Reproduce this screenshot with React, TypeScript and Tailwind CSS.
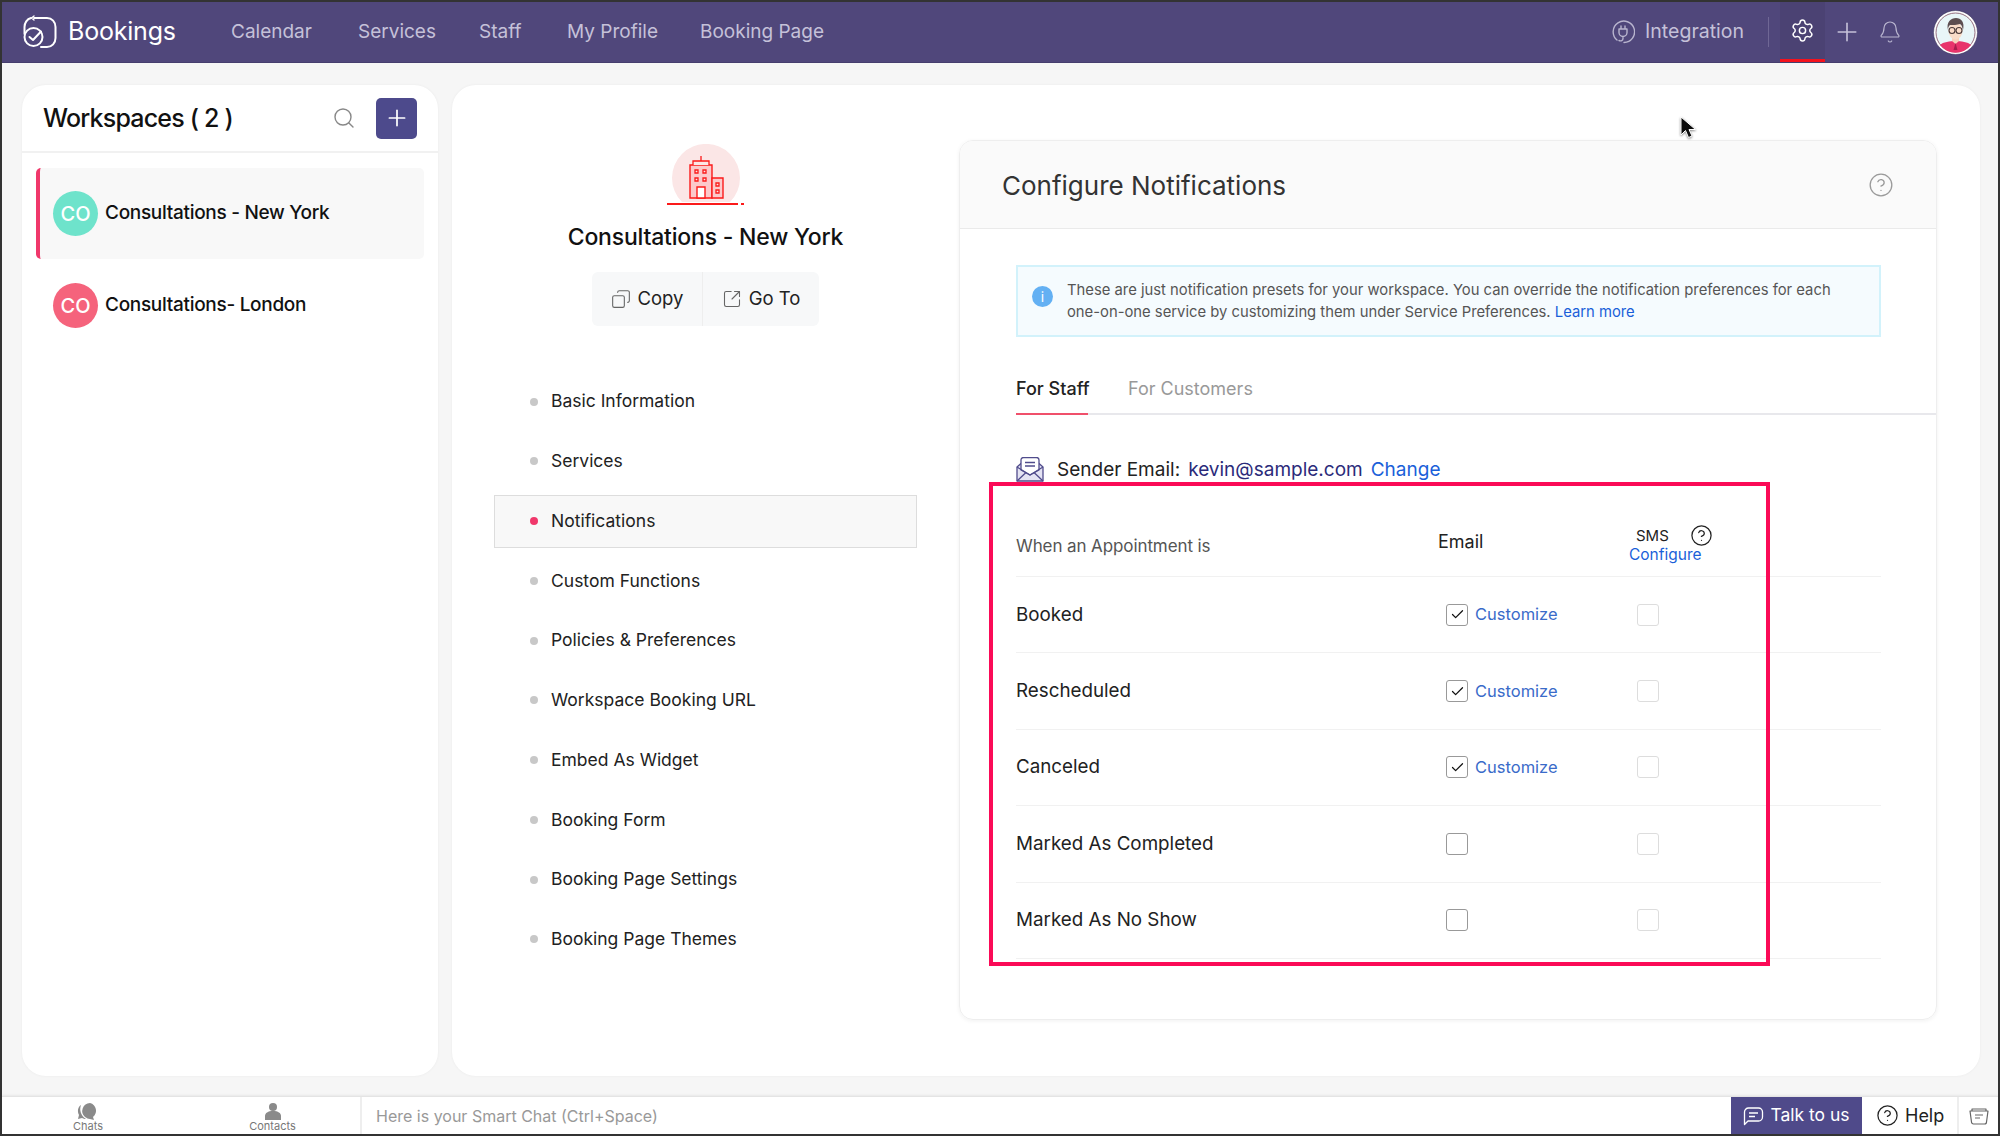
import { Bell, Check, CircleHelp, Copy, Plus, Search, Settings, SquareArrowOutUpRight } from "lucide-react";

const navLinks = [
  { label: "Calendar", className: "w-[127px]" },
  { label: "Services", className: "w-[121px]" },
  { label: "Staff", className: "w-[88px]" },
  { label: "My Profile", className: "w-[133px]" },
  { label: "Booking Page", className: "w-[124px]" },
];

const settingsLinks = [
  "Basic Information",
  "Services",
  "Notifications",
  "Custom Functions",
  "Policies & Preferences",
  "Workspace Booking URL",
  "Embed As Widget",
  "Booking Form",
  "Booking Page Settings",
  "Booking Page Themes",
];

const events = [
  { label: "Booked", checked: true },
  { label: "Rescheduled", checked: true },
  { label: "Canceled", checked: true },
  { label: "Marked As Completed", checked: false },
  { label: "Marked As No Show", checked: false },
];

function BookingsLogo() {
  return (
    <svg width="34" height="34" viewBox="0 0 34 34" fill="none" stroke="white" strokeWidth="2" strokeLinecap="round" strokeLinejoin="round">
      <path d="M11 3h13c5 0 8.500 4 8.500 9v11c0 5-3.500 9-8.500 9h-6" />
      <path d="M8 3C4 4 1.500 8 1.500 12v7" />
      <circle cx="10.500" cy="22" r="9" />
      <path d="M6.500 22l3.500 3 8-8.500" />
      <path d="M11 1L8.500 3 11 5" strokeWidth="1.400" />
    </svg>
  );
}

function PlugIcon() {
  return (
    <svg width="24" height="24" viewBox="0 0 24 24" fill="none" stroke="#b9b5cf" strokeWidth="1.4" strokeLinecap="round" strokeLinejoin="round">
      <path d="M13 22.500A10.700 10.700 0 1 0 6 20" />
      <path d="M8 9h8v3.500a4 4 0 0 1-8 0V9zM10 6v3M14 6v3M12 16.500v2c0 2-2 3-4 2" />
    </svg>
  );
}

function UserAvatar() {
  return (
    <svg width="45" height="45" viewBox="0 0 45 45">
      <circle cx="22.500" cy="22.500" r="22" fill="white" stroke="#3e3560" strokeWidth="0.600" />
      <circle cx="22.500" cy="22.500" r="19.500" fill="#e9f6f8" stroke="#7b4a5e" strokeWidth="0.800" />
      <path d="M7 35c3-3 10-4 15.500-4S35 32 38 35a19.500 19.500 0 0 1-31 0z" fill="#e8346b" />
      <path d="M19 25h7v6l-3.500 3-3.500-3z" fill="#f7d3bd" />
      <ellipse cx="22.500" cy="21" rx="7" ry="8.500" fill="#f9dcc8" />
      <path d="M15 20c-2-8 3-12 8-12s9 4 7 12c-1-3-1-5-3-6-3 1-7 1-10 1-1 1-2 2-2 5z" fill="#5d4e50" />
      <circle cx="19" cy="20.500" r="3" fill="none" stroke="#4a3a3a" strokeWidth="1.100" />
      <circle cx="26" cy="20.500" r="3" fill="none" stroke="#4a3a3a" strokeWidth="1.100" />
      <path d="M22.500 33l-2 7h4z" fill="#a81e4c" />
    </svg>
  );
}

function BuildingBadge() {
  return (
    <svg width="80" height="62" viewBox="0 0 80 62" fill="none">
      <path d="M16 58A34 34 0 1 1 64 58z" fill="#fbe6e6" />
      <path d="M1 60h71M75 60h3" stroke="#fb1a1a" strokeWidth="1.800" />
      <g stroke="#fb1a1a" strokeWidth="1.400" fill="#fcc9cb">
        <path d="M24 54V21h22v33z" />
        <path d="M46 34h11v20H46z" />
      </g>
      <g stroke="#fb1a1a" strokeWidth="1.300" fill="#fbe6e6">
        <path d="M27 21v-4h16v4M35 17v-5" />
        <path d="M29 26h3v3h-3zM37 26h3v3h-3zM29 34h3v3h-3zM37 34h3v3h-3zM50 39h3v3h-3zM50 46h3v3h-3z" />
      </g>
      <path d="M31 54V43h8v11z" fill="white" stroke="#fb1a1a" strokeWidth="1.400" />
    </svg>
  );
}

function SenderIcon() {
  return (
    <svg width="28" height="25" viewBox="0 0 28 25" fill="none" stroke="#504c8c" strokeWidth="1.300" strokeLinejoin="round">
      <path d="M1 10v14h26V10l-4-3.500H5z" fill="#e4e3f3" />
      <path d="M5 13V3a2.500 2.500 0 0 1 2.500-2.500h13A2.500 2.500 0 0 1 23 3v10l-9 5z" fill="white" />
      <path d="M9 5.500h10M9 9h10" />
      <path d="M1 24l9-8.500M27 24l-9-8.500M1 10l13 8 13-8" />
    </svg>
  );
}

function Cursor() {
  return (
    <svg width="18" height="24" viewBox="0 0 18 24" className="drop-shadow-[0_1px_1px_rgba(0,0,0,0.45)]">
      <path d="M1 1v18l4.500-4.500 3 7 3.500-1.500-3-6.500h6.500z" fill="#0c0c0c" stroke="white" strokeWidth="1" />
    </svg>
  );
}

function TopBar() {
  return (
    <header className="h-[61px] shrink-0 flex items-center bg-[#50477b] border-b border-[#463e6e]">
      <div className="ml-[21px] flex items-center gap-[11px] w-[208px]">
        <BookingsLogo />
        <span className="text-[25px] tracking-[-0.2px] text-white">Bookings</span>
      </div>
      {navLinks.map((link) => (
        <span key={link.label} className={`text-[19px] text-[#c5c1d9] ${link.className}`}>
          {link.label}
        </span>
      ))}
      <div className="ml-auto flex items-center h-full">
        <PlugIcon />
        <span className="ml-[10px] -mt-[1px] text-[19.500px] text-[#c5c1d9]">Integration</span>
        <div className="ml-[24px] h-[30px] w-px bg-[#6f6795]" />
        <div className="ml-[11px] h-full w-[45px] flex items-center justify-center bg-[#4b4273] border-b-[3px] border-[#f5121c]">
          <Settings size={25} strokeWidth={1.4} className="text-white" />
        </div>
        <Plus size={30} strokeWidth={1.3} className="ml-[7px] text-[#c5c1d9]" />
        <Bell size={24} strokeWidth={1.2} className="ml-[16px] text-[#b9b5cf]" />
        <div className="ml-[31px] mr-[20px]">
          <UserAvatar />
        </div>
      </div>
    </header>
  );
}

function WorkspaceItem({ name, color, active }: { name: string; color: string; active?: boolean }) {
  return (
    <div
      className={`h-[91px] flex items-center rounded-[5px] gap-[7px] ${
        active ? "pl-[13px] border-l-[4px] border-[#f0386b] bg-[#f8f8f8]" : "pl-[17px] mt-[1px]"
      }`}
    >
      <div className={`w-[45px] h-[45px] rounded-full flex items-center justify-center text-white text-[20px] font-medium ${color}`}>
        CO
      </div>
      <span className="text-[19px] font-medium text-[#111] tracking-[-0.3px]">{name}</span>
    </div>
  );
}

function WorkspacesCard() {
  return (
    <aside className="w-[416px] h-[991px] bg-white rounded-[24px] shadow-[0_0_3px_rgba(0,0,0,0.05)]">
      <div className="h-[68px] border-b-2 border-[#f1f1f1] flex items-center pl-[21px] pr-[21px]">
        <h1 className="mt-[2px] text-[25px] font-medium text-[#111] tracking-[-0.8px]">Workspaces ( 2 )</h1>
        <Search size={24} strokeWidth={1.4} className="ml-auto text-[#888]" />
        <button className="ml-[20px] w-[41px] h-[41px] rounded-[5px] bg-[#4d4a8c] flex items-center justify-center">
          <Plus size={26} strokeWidth={1.6} className="text-white" />
        </button>
      </div>
      <div className="mx-[14px] mt-[15px]">
        <WorkspaceItem name="Consultations - New York" color="bg-[#6ee3cb]" active />
        <WorkspaceItem name="Consultations- London" color="bg-[#f5637c]" />
      </div>
    </aside>
  );
}

function SettingsColumn() {
  return (
    <div className="w-[507px] shrink-0 flex flex-col items-center pt-[59px]">
      <BuildingBadge />
      <h2 className="mt-[13px] text-[23px] leading-[36px] font-medium text-[#111] tracking-[-0.2px]">Consultations - New York</h2>
      <div className="mt-[17px] h-[54px] w-[227px] flex rounded-[6px] bg-[#f7f8f9] text-[18.500px] text-[#222]">
        <div className="w-[111px] flex items-center justify-center gap-[7px] border-r border-[#eeeeee]">
          <Copy size={20} strokeWidth={1.3} className="text-[#666] -scale-x-100" />
          Copy
        </div>
        <div className="flex-1 flex items-center justify-center gap-[7px]">
          <SquareArrowOutUpRight size={20} strokeWidth={1.3} className="text-[#666]" />
          Go To
        </div>
      </div>
      <nav className="mt-[49px] w-[423px] flex flex-col gap-[6.750px]">
        {settingsLinks.map((link) => {
          const active = link === "Notifications";
          return (
            <div
              key={link}
              className={`h-[53px] flex items-center pl-[35px] gap-[13px] text-[17.500px] text-[#222] border ${
                active ? "bg-[#f8f8f8] border-[#dddddd]" : "border-transparent"
              }`}
            >
              <span className={`w-[8px] h-[8px] rounded-full ${active ? "bg-[#f0386b]" : "bg-[#c8c8c8]"}`} />
              {link}
            </div>
          );
        })}
      </nav>
    </div>
  );
}

function Checkbox({ checked, muted }: { checked?: boolean; muted?: boolean }) {
  return (
    <span
      className={`w-[22px] h-[22px] shrink-0 rounded-[3px] border bg-white flex items-center justify-center ${
        muted ? "border-[#dddddd]" : "border-[#999999]"
      }`}
    >
      {checked && <Check size={15} strokeWidth={2} className="text-[#111]" />}
    </span>
  );
}

function NotificationTable() {
  return (
    <div className="relative mr-[55px]">
      <div className="h-[95px] flex border-b border-[#f1f1f1]">
        <div className="w-[422px] pt-[52px] text-[17px] leading-[24px] text-[#555] tracking-[-0.1px]">When an Appointment is</div>
        <div className="w-[191px] pt-[48px] text-[18px] leading-[24px] text-[#222]">Email</div>
        <div className="pt-[44px] w-[100px]">
          <div className="flex items-center h-[20px] pl-[7px] text-[15px] text-[#222]">
            SMS
            <CircleHelp size={23} strokeWidth={1.3} className="ml-[21px] -mt-[2px] text-[#222]" />
          </div>
          <div className="text-[15.500px] leading-[17px] text-[#1a5fd9]">Configure</div>
        </div>
      </div>
      {events.map((event) => (
        <div key={event.label} className="h-[76.400px] flex items-center border-b border-[#f1f1f1]">
          <div className="w-[422px] text-[18.800px] text-[#222]">{event.label}</div>
          <div className="w-[191px] pl-[8px] flex items-center gap-[7px]">
            <Checkbox checked={event.checked} />
            {event.checked && <span className="text-[16.500px] text-[#3a6bc9]">Customize</span>}
          </div>
          <div className="pl-[8px]">
            <Checkbox muted />
          </div>
        </div>
      ))}
      {/* highlight drawn over the table */}
      <div className="absolute -left-[27px] top-0 w-[781px] h-[484px] border-[4px] border-[#fb0a57] pointer-events-none" />
    </div>
  );
}

function NotificationsPanel() {
  return (
    <section className="mt-[55px] w-[978px] h-[880px] rounded-[14px] border border-[#eeeeee] shadow-[0_1px_4px_rgba(0,0,0,0.06)] overflow-hidden">
      <div className="h-[88px] bg-[#fafafa] border-b border-[#eaeaea] flex items-center justify-between pl-[42px] pr-[42px]">
        <h3 className="mt-[2px] text-[26px] text-[#333]">Configure Notifications</h3>
        <CircleHelp size={26} strokeWidth={1.2} className="text-[#9a9a9a]" />
      </div>
      <div className="pl-[56px]">
        <div className="mt-[36px] mr-[55px] h-[72px] flex items-center bg-[#f5fbfe] border-2 border-[#d2f2fb] pl-[14px]">
          <span className="w-[21px] h-[21px] -mt-[10px] rounded-full bg-[#63b0f3] text-white text-[14px] flex items-center justify-center shrink-0">
            i
          </span>
          <p className="ml-[14px] text-[14.800px] leading-[22px] text-[#555]">
            These are just notification presets for your workspace. You can override the notification preferences for each
            <br />
            one-on-one service by customizing them under Service Preferences.{" "}
            <span className="text-[#1a5fd9]">Learn more</span>
          </p>
        </div>
        <div className="mt-[34px] h-[44px] flex border-b-2 border-[#e8e8ec] text-[18px]">
          <span className="h-[44px] leading-[36px] w-[72px] border-b-2 border-[#f0506b] text-[#222] font-medium whitespace-nowrap">For Staff</span>
          <span className="ml-[40px] leading-[36px] text-[#999]">For Customers</span>
        </div>
        <div className="mt-[42px] h-[25px] flex items-center text-[19px]">
          <SenderIcon />
          <span className="ml-[13px] mt-[2px] text-[#222]">Sender Email:</span>
          <span className="ml-[8px] mt-[2px] text-[#2b2b7a]">kevin@sample.com</span>
          <span className="ml-[8px] mt-[2px] text-[#1a5fd9]">Change</span>
        </div>
        <NotificationTable />
      </div>
    </section>
  );
}

function BottomBar() {
  return (
    <footer className="h-[38px] shrink-0 flex items-stretch bg-white border-t border-[#e4e4e4] shadow-[0_-1px_2px_rgba(0,0,0,0.06)]">
      <div className="w-[360px] shrink-0 flex border-r-2 border-[#eeeeee] text-[11px] text-[#777]">
        <div className="w-[172px] flex flex-col items-center pt-[5px] leading-[11px]">
          <svg width="22" height="19" viewBox="0 0 22 19" fill="#8a8a8a">
            <path d="M4 3C1 5 0 9 2 13l-1 4 4-1c2 1 3 1 4 1C4 14 2 8 4 3z" />
            <path d="M13 1a8 8 0 0 0-5 14c2 1 3 2 5 2l4 1-1-3a8 8 0 0 0-3-14z" />
          </svg>
          Chats
        </div>
        <div className="w-[186px] pl-[11px] flex flex-col items-center pt-[5px] leading-[11px]">
          <svg width="18" height="19" viewBox="0 0 18 19" fill="#8a8a8a">
            <circle cx="9" cy="5" r="4" />
            <path d="M1 18v-4c0-3 3-5 8-5s8 2 8 5v4z" />
          </svg>
          Contacts
        </div>
      </div>
      <div className="flex-1 pl-[14px] flex items-center text-[16px] text-[#999]">Here is your Smart Chat (Ctrl+Space)</div>
      <div className="w-[131px] shrink-0 flex items-center justify-center gap-[6px] bg-[#4f4a8a] text-white text-[17.500px]">
        <svg width="21" height="20" viewBox="0 0 21 20" fill="none" stroke="white" strokeWidth="1.300" strokeLinejoin="round">
          <path d="M1.500 18.500V6a4 4 0 0 1 4-4h10a4 4 0 0 1 4 4v5a4 4 0 0 1-4 4H5z" />
          <path d="M6 7h9M6 10.500h6" />
        </svg>
        Talk to us
      </div>
      <div className="w-[97px] shrink-0 flex items-center pl-[14px] gap-[6px] text-[18px] text-[#222] border-r-2 border-[#eeeeee]">
        <CircleHelp size={23} strokeWidth={1.3} />
        Help
      </div>
      <div className="w-[39px] shrink-0 flex items-center justify-center">
        <svg width="20" height="20" viewBox="0 0 20 20" fill="none" stroke="#666" strokeWidth="1.200" strokeLinejoin="round">
          <path d="M3 5V3h14v2" />
          <path d="M1 5h18l-1.500 11a2 2 0 0 1-2 2h-11a2 2 0 0 1-2-2z" />
          <path d="M6 9h8M6 12h5" />
        </svg>
      </div>
    </footer>
  );
}

export default function App() {
  return (
    <div className="relative w-[2000px] h-[1136px] flex flex-col overflow-hidden border-2 border-[#333333] bg-[#f6f6f6] font-['Inter','Liberation_Sans',sans-serif]">
      <TopBar />
      <main className="flex-1 flex gap-[14px] pl-[20px] pr-[18px] pt-[22px]">
        <WorkspacesCard />
        <div className="relative flex-1 h-[991px] flex bg-white rounded-[24px] shadow-[0_0_3px_rgba(0,0,0,0.05)]">
          <SettingsColumn />
          <NotificationsPanel />
          {/* mouse pointer caught in the screenshot */}
          <div className="absolute left-[1228px] top-[31px]">
            <Cursor />
          </div>
        </div>
      </main>
      <BottomBar />
    </div>
  );
}
